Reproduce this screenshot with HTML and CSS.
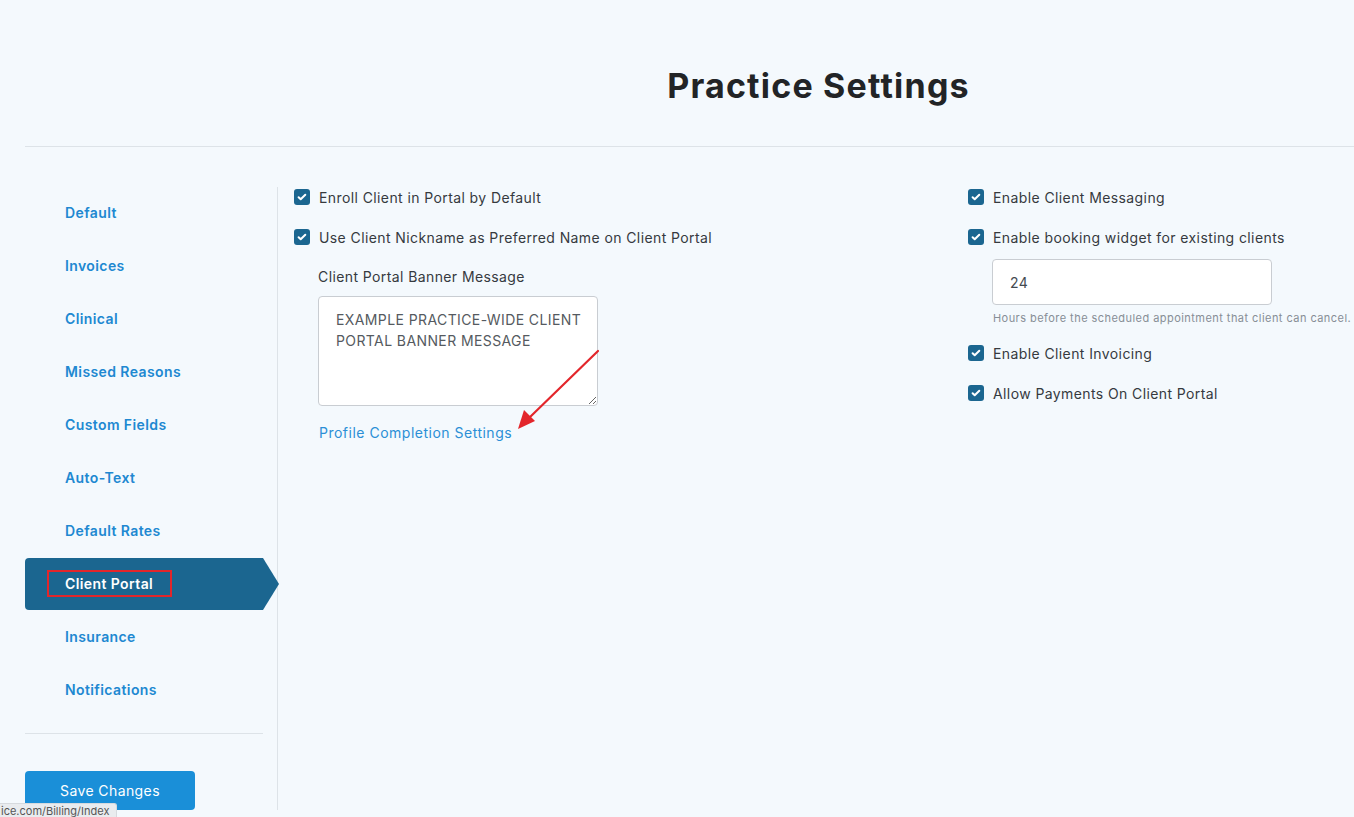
FILE: index.html
```html
<!DOCTYPE html>
<html lang="en">
<head>
<meta charset="utf-8">
<title>Practice Settings</title>
<link rel="stylesheet" href="styles.css">
</head>
<body>
<div class="page">
  <header class="page-header">
    <h1 class="page-title">Practice Settings</h1>
  </header>
  <div class="layout">
    <aside class="sidebar">
      <nav class="nav">
        <a class="nav-item">Default</a>
        <a class="nav-item">Invoices</a>
        <a class="nav-item">Clinical</a>
        <a class="nav-item">Missed Reasons</a>
        <a class="nav-item">Custom Fields</a>
        <a class="nav-item">Auto-Text</a>
        <a class="nav-item">Default Rates</a>
        <a class="nav-item active"><span class="highlight">Client Portal</span></a>
        <a class="nav-item">Insurance</a>
        <a class="nav-item">Notifications</a>
      </nav>
      <hr class="side-sep">
      <button class="btn-save">Save Changes</button>
    </aside>
    <main class="content">
      <section class="col">
        <label class="check-row"><span class="checkbox"><svg viewBox="0 0 16 16"><path d="M4.6 8.3l2.1 2 4.6-4.6" /></svg></span>Enroll Client in Portal by Default</label>
        <label class="check-row"><span class="checkbox"><svg viewBox="0 0 16 16"><path d="M4.6 8.3l2.1 2 4.6-4.6" /></svg></span>Use Client Nickname as Preferred Name on Client Portal</label>
        <div class="sub">
          <div class="field-label">Client Portal Banner Message</div>
          <textarea class="banner">EXAMPLE PRACTICE-WIDE CLIENT PORTAL BANNER MESSAGE</textarea>
          <a class="link">Profile Completion Settings</a>
        </div>
      </section>
      <section class="col">
        <label class="check-row"><span class="checkbox"><svg viewBox="0 0 16 16"><path d="M4.6 8.3l2.1 2 4.6-4.6" /></svg></span>Enable Client Messaging</label>
        <label class="check-row"><span class="checkbox"><svg viewBox="0 0 16 16"><path d="M4.6 8.3l2.1 2 4.6-4.6" /></svg></span>Enable booking widget for existing clients</label>
        <div class="sub sub-right">
          <input class="hours" type="text" value="24">
          <div class="help">Hours before the scheduled appointment that client can cancel.</div>
        </div>
        <label class="check-row"><span class="checkbox"><svg viewBox="0 0 16 16"><path d="M4.6 8.3l2.1 2 4.6-4.6" /></svg></span>Enable Client Invoicing</label>
        <label class="check-row"><span class="checkbox"><svg viewBox="0 0 16 16"><path d="M4.6 8.3l2.1 2 4.6-4.6" /></svg></span>Allow Payments On Client Portal</label>
      </section>
    </main>
  </div>
</div>
<svg class="annot-arrow" width="100" height="100" viewBox="0 0 100 100">
  <line x1="81" y1="3" x2="12" y2="70" stroke="#e3262b" stroke-width="2.2" stroke-linecap="round"/>
  <polygon points="1,81 7,62 18,73" fill="#e3262b"/>
</svg>
<div class="statusbar">ice.com/Billing/Index</div>
</body>
</html>
```

FILE: styles.css
```css
* { box-sizing: border-box; }
html, body { margin: 0; padding: 0; }
body {
  background: #f4f9fd;
  font-family: "Inter", "Noto Sans", sans-serif;
  color: #363a3f;
  font-size: 14px;
  letter-spacing: 0.4px;
  width: 1354px;
  height: 817px;
  overflow: hidden;
  position: relative;
}
.page { padding-left: 25px; }
.page-header {
  height: 147px;
  border-bottom: 1px solid #dde3e8;
  padding-left: 258px;
  display: flex;
  justify-content: center;
}
.page-title {
  margin: 0;
  padding-top: 64px;
  font-size: 34px;
  font-weight: 700;
  color: #222426;
  line-height: 44px;
  letter-spacing: 1.2px;
}
.layout {
  display: flex;
  padding-top: 40px;
}
.sidebar {
  width: 253px;
  flex: none;
  border-right: 1px solid #dde3e8;
  height: 623px;
}
.nav { display: flex; flex-direction: column; }
.nav-item {
  height: 52px;
  margin-bottom: 1px;
  display: flex;
  align-items: center;
  padding-left: 40px;
  padding-bottom: 1px;
  font-weight: 600;
  font-size: 14px;
  color: #2088d1;
  width: 238px;
}
.nav-item.active {
  width: 254px;
  background: #1b6690;
  color: #fff;
  border-radius: 4px 0 0 4px;
  clip-path: polygon(0 0, calc(100% - 16px) 0, 100% 50%, calc(100% - 16px) 100%, 0 100%);
}
.highlight {
  border: 2px solid #e3262b;
  padding: 3px 17px 3px 16px;
  margin-left: -18px;
}
.side-sep {
  width: 238px;
  margin: 16px 0 37px 0;
  border: none;
  border-top: 1px solid #dde3e8;
}
.btn-save {
  width: 170px;
  height: 39px;
  background: #1a8fd8;
  color: #fff;
  border: none;
  border-radius: 4px;
  font-family: inherit;
  font-size: 14px;
  letter-spacing: 0.4px;
  padding: 0;
}
.content {
  display: grid;
  grid-template-columns: 674px 1fr;
  padding-left: 16px;
  flex: 1;
}
.col { display: flex; flex-direction: column; }
.check-row {
  display: flex;
  align-items: center;
  height: 20px;
  margin-bottom: 20px;
  gap: 9px;
  color: #363a3f;
}
.checkbox {
  width: 16px;
  height: 16px;
  border-radius: 3px;
  background: #1b6690;
  display: inline-flex;
  flex: none;
}
.checkbox svg {
  width: 16px;
  height: 16px;
  fill: none;
  stroke: #fff;
  stroke-width: 2;
  stroke-linecap: round;
  stroke-linejoin: round;
}
.sub { padding-left: 24px; display: flex; flex-direction: column; align-items: flex-start; }
.field-label { height: 20px; line-height: 20px; margin-bottom: 9px; }
.banner {
  width: 280px;
  height: 110px;
  background: #fff;
  border: 1px solid #c9cdd2;
  border-radius: 4px;
  padding: 12px 6px 12px 17px;
  font-family: inherit;
  font-size: 14px;
  letter-spacing: 0.4px;
  line-height: 21px;
  color: #555a60;
  resize: vertical;
  overflow: hidden;
  margin: 0;
}
.link {
  margin-top: 17px;
  height: 20px;
  line-height: 20px;
  color: #2b8fd6;
  margin-left: 1px;
  letter-spacing: 0.5px;
}
.sub-right { margin-top: -8px; margin-bottom: 18px; }
.hours {
  width: 280px;
  height: 46px;
  background: #fff;
  border: 1px solid #c9cdd2;
  border-radius: 4px;
  padding: 0 17px;
  font-family: inherit;
  font-size: 14px;
  letter-spacing: 0.4px;
  color: #444a50;
  margin: 0;
}
.help {
  margin-top: 6px;
  font-size: 11px;
  line-height: 14px;
  letter-spacing: 0.45px;
  color: #878e96;
  white-space: nowrap;
  padding-left: 1px;
}
.annot-arrow {
  position: absolute;
  left: 517px;
  top: 348px;
}
.statusbar {
  position: absolute;
  left: 0;
  bottom: 0;
  height: 14px;
  width: 117px;
  background: #e9ecef;
  border: 1px solid #d6dade;
  border-left: none;
  border-bottom: none;
  border-radius: 0 3px 0 0;
  font-size: 11px;
  letter-spacing: 0;
  line-height: 15px;
  color: #555;
  overflow: hidden;
  white-space: nowrap;
  padding-left: 1px;
}
```
